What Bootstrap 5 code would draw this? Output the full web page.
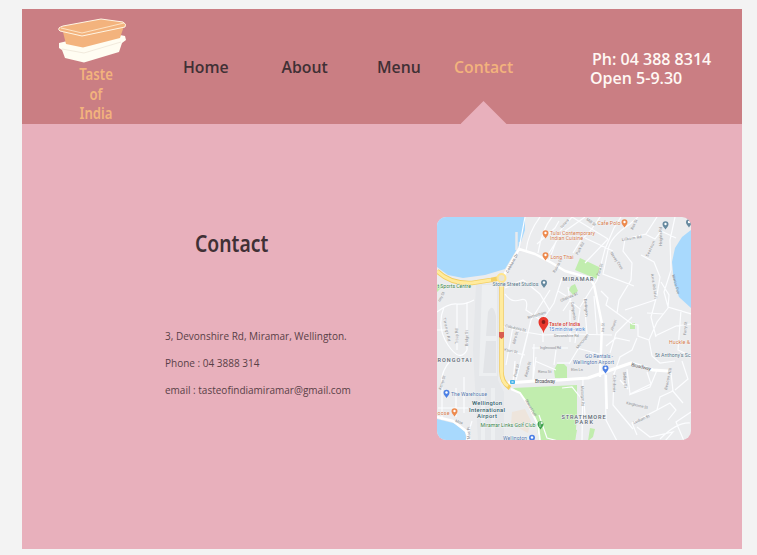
<!DOCTYPE html>
<html lang="en">
<head>
<meta charset="utf-8">
<meta name="viewport" content="width=device-width, initial-scale=1">
<title>Taste of India - Contact</title>
<link rel="stylesheet" href="https://cdn.jsdelivr.net/npm/bootstrap@5.3.0/dist/css/bootstrap.min.css">
<style>
body{background:#f3f3f3;font-family:"Open Sans",sans-serif;color:#403035;overflow:hidden}
.page-frame{width:720px;height:540px;margin:9px 0 0 22px;background:#e8b0bc}
.site-head{height:115px;background:#ca7e83}
.brand-box{width:148px;padding-top:9px;color:#f3b37d}
.brand-art{width:70px;height:46px;margin-left:35px}
.brand-name{font:600 15.5px/19.5px "Noto Sans","Open Sans",sans-serif;transform:scaleX(.85);margin-top:1px}
.site-nav{width:350px;margin-left:13px;font-size:15.8px;font-weight:600;line-height:22px;padding-top:47px}
.site-nav a{color:#403035;white-space:nowrap;padding:0}
.site-nav a.active{color:#f3b37d}
.nav-slot-a{width:98.5px}.nav-slot-b{width:95.5px}.nav-slot-c{width:77px}
.pointer{width:46px;height:23px;bottom:-46px;left:6.5px;background:#e8b0bc;clip-path:polygon(50% 0,100% 100%,0 100%)}
.hours{margin-left:57px;padding-top:41px;color:#fff8f4;font-size:16px;font-weight:600;line-height:19.2px;white-space:nowrap}
.hours-phone{margin-left:2px}
.details{width:415px;padding:105px 0 0 143px}
.details h1{font:600 23px/28px "Noto Sans","Open Sans",sans-serif;margin:0 0 0 29.5px;transform:scaleX(.84);transform-origin:left;color:#403035}
.lines{margin-top:66px;font-size:10px;line-height:27px;color:#593f47;white-space:nowrap}
.map-box{width:254px;height:223px;margin-top:93px;border-radius:9px}
</style>
<script src="https://cdn.jsdelivr.net/npm/bootstrap@5.3.0/dist/js/bootstrap.bundle.min.js"></script>
</head>
<body>
<div class="page-frame">
<header class="site-head d-flex">
  <div class="brand-box text-center">
    <svg class="brand-art d-block" viewBox="57 18 70 46">
      <path d="M59 43 59 48 62 50 65 58 84 62.5 119 52 122 43 126 40 125 36 105 32Z" fill="#fffdf2"/>
      <path d="M62 49 84 53 121 42" fill="none" stroke="#e7ddcf" stroke-width=".6"/>
      <path d="M63 32 66 44 83 47.500 120 38 124 26Z" fill="#f3b37d"/>
      <path d="M59 28 Q60 27 63 26 L101 19 123 22 Q127 24 125 27 L82 36 60 31 Q58 30 59 28Z" fill="#f3b37d" stroke="#fff5e4" stroke-width="1"/>
      <path d="M61 28 82 33 124 23" fill="none" stroke="#fff0d8" stroke-width=".8"/>
    </svg>
    <div class="brand-name">Taste<br>of<br>India</div>
  </div>
  <nav class="site-nav nav flex-nowrap align-items-start">
    <div class="nav-slot-a"><a class="nav-link" href="#">Home</a></div>
    <div class="nav-slot-b"><a class="nav-link" href="#">About</a></div>
    <div class="nav-slot-c"><a class="nav-link" href="#">Menu</a></div>
    <div class="position-relative"><a class="nav-link active" href="#">Contact</a><span class="pointer position-absolute"></span></div>
  </nav>
  <div class="hours"><div class="hours-phone">Ph: 04 388 8314</div><div>Open 5-9.30</div></div>
</header>
<main class="d-flex align-items-start">
  <section class="details">
    <h1>Contact</h1>
    <div class="lines"><div>3, Devonshire Rd, Miramar, Wellington.</div><div>Phone : 04 3888 314</div><div>email : tasteofindiamiramar@gmail.com</div></div>
  </section>
  <div class="map-box overflow-hidden">
  <svg class="d-block w-100 h-100" viewBox="437 217 254 223" font-family="Roboto, sans-serif">
    <rect x="437" y="217" width="254" height="224" fill="#ebecee"/>
    <!-- airport apron -->
    <path d="M476 284H499L498 380 504 392V441H478L473 350Z" fill="#e5e7ea"/>
    <path d="M482 285H497V376H479Z" fill="#edeff1"/>
    <path d="M488 312Q493 302 496 316V336H486ZM486 341H496V373H483Z" fill="#e2e4e7"/>
    <path d="M483 388V440M493 388V440" stroke="#edeff1" stroke-width="4" fill="none"/>
    <!-- water -->
    <g fill="#a8d9fd">
      <path d="M437 217H525V230L521 242 517 249 505 269 485 275 463 278 448 275 437 267Z"/>
      <path d="M691 230 682 237 675 248 672 262 674 283 679 297 691 308Z"/>
      <path d="M437 419 457 424 465 432 467 441H437Z"/>
    </g>
    <path d="M516.500 232V250M520 242V253" stroke="#e9eaed" stroke-width="2.500"/>
    <!-- parks -->
    <g fill="#c1edae">
      <path d="M513 388 577 385V416L575 441H539L536 420 527 401Z"/>
      <path d="M557 364H564L567 367V378H555L554 370Z"/>
      <path d="M570 428 577 430 575 441H568ZM590 428 595 429 593 437 588 441Z"/>
      <path d="M580 258 601 268 597 279 575 270Z"/>
      <path d="M571 286 575 284 578 291 573 295 569 290ZM630 323H635V329H630ZM437 284 443 286 437 292Z"/>
    </g>
    <path d="M512 412 525 409 531 421 528 433 511 424Z" fill="#eee5dc"/>
    <!-- minor streets -->
    <g fill="none" stroke="#fcfdff" stroke-width="1.200">
      <path d="M525 217 519 249M540 217Q528 233 526 251M552 217Q542 229 538 253M559 221 555 228 537 244M572 217 560 231 549 260M572 217 608 239M585 217 561 234 549 253"/>
      <path d="M437 312Q449 303 457 304T474 300M444 307Q436 327 448 345T467 350M457 304V350M467 302V350M437 330H446M451 360Q439 373 442 389V420M456 388V417M464 377V413M438 408H468M466 441 472 421"/>
      <path d="M505 294Q511 303 520 300T526 310L542 321M505 288 523 280 540 294 550 311M550 290 531 320 522 358M562 278 554 303 542 321M558 291 571 299 563 311M568 287 570 301 580 309 575 343M501 326 525 332 543 335 572 334 612 335M513 326 506 365M528 332 516 380M543 321V342M503 350 525 355M534 344 533 379M532 348H568M570 310V342M584 298 587 334M594 296 597 334M583 341 569 364M515 361 513 382M536 357 533 380M556 350 554 365M535 361 556 370"/>
      <path d="M600 217Q591 232 581 240L573 253M608 239 585 263M585 238 613 251M621 217 614 228 605 249 597 280 580 307M638 217 630 224Q610 237 608 250L603 274 634 286M657 217 646 234 625 239 623 251 632 263 631 280 619 300 617 313 632 324 638 325V336L649 340 657 322 668 308 669 295 661 282M645 234 655 239 661 231 676 238M675 217 670 240 671 270 664 292 668 307 691 314M641 255 654 262 660 277 657 295 651 317 656 337M655 300 625 310M647 313 664 314M632 317 616 333 610 353M617 313 606 305 608 298 601 291M637 338 632 350 620 357 614 374M649 340 652 356 660 363 675 361M655 336 676 326 691 324M681 310 678 350 691 356M606 346 616 338 630 341"/>
      <path d="M583 377 582 441M605 374 606 420 617 441M614 373 613 405 623 417 633 429M627 369 630 394 651 384 647 372M657 370 650 387 629 395M671 373 673 391 660 397 657 410 632 423 637 435M672 390 683 403M682 361 688 379 675 390M637 427 650 437 673 432 665 441M657 410 670 403 676 410 668 420M660 439Q677 422 690 423M684 441 676 422 691 412M539 415 547 438 558 441M562 388 572 387 584 402 585 415M557 363H570M620 380 628 389M590 353 603 361M577 348 606 356"/>
    </g>
    <!-- main streets -->
    <g fill="none" stroke="#fff" stroke-linejoin="round">
      <path d="M504 275 519 249 535 254 552 263 565 271 590 278 594 285 602 324 600 377" stroke-width="2.500"/>
      <path d="M508 383 535 381 560 380 588 378 605 372 631 363 653 370 668 371" stroke-width="3.200"/>
      <path d="M511 389 520 393 529 406 538 425 540 441M606 375 607 409" stroke-width="2"/>
      <path d="M437 417 453 421 466 431 470 441" stroke-width="2.500"/>
    </g>
    <g fill="none" stroke="#f3cf62"><path d="M437 271Q450 284 472 283L491 280 501 278M501.500 282V370Q501 382 510 388" stroke-width="4.600"/><path d="M437 271Q450 284 472 283L491 280M501.500 282V370Q501 382 508 386" stroke="#ffeb9e" stroke-width="3"/><circle cx="501.500" cy="278" r="4" fill="#e9e5d6" stroke="#ffe58d" stroke-width="2"/></g>
    <path d="M499 332H504V337L501.500 339 499 337Z" fill="#d85c4f"/><rect x="510" y="380" width="5" height="4" rx="1" fill="#49b3e8"/><path d="M511.500 382H513.500" stroke="#fff"/>
    <!-- street names -->
    <g font-size="3.900" fill="#8b8e92">
      <text transform="translate(508 273) rotate(-61)" textLength="21" fill="#686b70">Cobham Dr</text>
      <text transform="translate(440 302) rotate(-63)">ney St</text><text transform="translate(443 318) rotate(78)" textLength="24">Tirangi Rd</text>
      <text transform="translate(458 344) rotate(-90)">Troup Rd</text><text transform="translate(468 346) rotate(-90)">Bridge St</text>
      <text x="505" y="327" transform="rotate(13 505 327)" textLength="21">Caledonia St</text><text transform="translate(528 319) rotate(-17)">Rotherham</text>
      <text x="540" y="349" textLength="21">Inglewood Rd</text><text x="554" y="336.500">Devonshire Rd</text><text x="504" y="351" transform="rotate(10 504 351)">Kauri St</text><text transform="translate(515 344) rotate(-75)">Miro St</text><text transform="translate(516 377) rotate(-75)">Hunt St</text><text transform="translate(527 377) rotate(-75)">Kedah St</text><text x="538" y="373">Rimu St</text>
      <text transform="translate(561 302) rotate(-24)">Chelsea St</text><text transform="translate(555 273) rotate(-62)">Rauna St</text><text transform="translate(571 302) rotate(82)">Camperdn</text><text transform="translate(584 299) rotate(85)">Darlington</text><text transform="translate(604 332) rotate(-88)">Ira St</text><text transform="translate(613 331) rotate(-70)">Ahuriri</text>
      <text transform="translate(578 255) rotate(-62)">Park Rd</text><text transform="translate(599 276) rotate(-72)">Para St</text><text transform="translate(610 253) rotate(56)" textLength="20">Nevay Cres</text><text x="622" y="241" transform="rotate(-9 622 241)" textLength="20">Lilburn Rd</text><text transform="translate(648 257) rotate(-65)" textLength="17">Seatoun</text><text transform="translate(662 246) rotate(-90)">Heights Rd</text><text transform="translate(651 274) rotate(82)" textLength="25">Awa Rd Hill</text><text transform="translate(672 275) rotate(75)" textLength="20">Marine Pde</text><text transform="translate(686 335) rotate(-85)">Ferry St</text>
      <text transform="translate(578 349) rotate(-52)">Monorgan</text><text x="571" y="371">Elm Ln</text><text transform="translate(581 386) rotate(88)" textLength="20">Monorgan Rd</text><text transform="translate(613 375) rotate(90)">Caledonia</text><text transform="translate(623 372) rotate(85)">Sidlaw St</text><text transform="translate(667 390) rotate(-78)" textLength="22">Beacon Hill</text><text x="626" y="404" transform="rotate(13 626 404)">Kinghorne St</text><text x="634" y="424" transform="rotate(-24 634 424)">Ludlam St</text><text transform="translate(525 400) rotate(61)" textLength="19">Stewart Duff</text><text x="455" y="422" transform="rotate(18 455 422)">Moa</text><text transform="translate(470 439) rotate(-90)">Moa Pt</text><text transform="translate(441 390) rotate(-72)">Kemp St</text><text transform="translate(586 220) rotate(35)">Mill St</text><text transform="translate(633 230) rotate(-66)">Rex St</text><text transform="translate(562 229) rotate(-50)">Totara</text>
      <g fill="#505357" font-size="5"><text x="535" y="383" textLength="20">Broadway</text><text x="631" y="366" transform="rotate(13 631 366)" textLength="20">Broadway</text></g>
    </g>
    <!-- map pins -->
    <defs><path id="pin" d="M0 4.500C-1 2.500-3 1.500-3-.8A3 3 0 0 1 3-.8C3 1.500 1 2.500 0 4.500Z"/></defs>
    <g fill="#ed8a4e"><use href="#pin" x="545.500" y="234"/><use href="#pin" x="545.500" y="256"/><use href="#pin" x="624.500" y="223"/><use href="#pin" x="454.500" y="412"/></g>
    <g fill="#66899f"><use href="#pin" x="544" y="283.500"/><use href="#pin" x="665.500" y="225"/><use href="#pin" x="689" y="223"/></g>
    <g fill="#4d80e5"><use href="#pin" x="446.500" y="393.500"/><use href="#pin" x="605.500" y="369"/><use href="#pin" x="532" y="438.500"/></g><use href="#pin" x="540.500" y="425" fill="#3da04c"/>
    <g fill="#fff"><circle cx="545.500" cy="233" r="1.200"/><circle cx="545.500" cy="255" r="1.200"/><circle cx="624.500" cy="222" r="1.200"/><circle cx="454.500" cy="411" r="1.200"/><circle cx="544" cy="282.500" r="1.200"/><circle cx="665.500" cy="224" r="1.200"/><circle cx="689" cy="222" r="1.200"/><circle cx="446.500" cy="392.500" r="1.200"/><circle cx="605.500" cy="368" r="1.200"/><circle cx="532" cy="437.500" r="1.200"/><path d="M540 422V427M541 422L543 423 541 424" stroke="#fff" stroke-width=".6"/></g>
    <path d="M543.500 333.500C542.500 328 538.500 326.500 538.500 322A5 5 0 0 1 548.500 322C548.500 326.500 544.500 328 543.500 333.500Z" fill="#e8372c"/><circle cx="543.500" cy="322" r="1.900" fill="#891e19"/>
    <!-- places -->
    <g stroke="#f4f5f6" stroke-width=".8" paint-order="stroke" font-size="5.300">
      <g fill="#d77a4b"><text x="550" y="235" textLength="45">Tulsi Contemporary</text><text x="550" y="240" textLength="33">Indian Cuisine</text><text x="550.500" y="259" textLength="23">Long Thai</text><text x="597.500" y="225" textLength="23">Cafe Polo</text><text x="669" y="344" textLength="21">Huckle &amp;</text><text x="437.500" y="414.500" textLength="12">oose</text></g>
      <g fill="#557487"><text x="492.500" y="286" textLength="46">Stone Street Studios</text><text x="655" y="356.500" textLength="35.500">St Anthony's Sc</text></g>
      <g fill="#5477ad"><text x="451" y="396" textLength="36">The Warehouse</text><text x="585" y="358" textLength="28">GO Rentals -</text><text x="573" y="363.500" textLength="41">Wellington Airport</text><text x="503" y="439.500" textLength="24">Wellington</text></g>
      <g fill="#398447"><text x="480.500" y="427" textLength="55">Miramar Links Golf Club</text><text x="437.500" y="287.500" textLength="33.500">t Sports Centre</text></g>
      <text x="549" y="325.500" fill="#d53e32" font-weight="500" textLength="31">Taste of India</text><text x="549" y="330.500" fill="#4b83d5" font-size="4.800" textLength="36">15 min drive - work</text>
      <g fill="#33606c" font-size="5.900" font-weight="500" text-anchor="middle"><text x="487" y="405" textLength="30">Wellington</text><text x="487" y="411.500" textLength="36">International</text><text x="487" y="418" textLength="20">Airport</text></g>
      <g fill="#5b6672" font-size="5.500" font-weight="500"><text x="562.500" y="281" textLength="31">MIRAMAR</text><text x="437.500" y="362" textLength="34">RONGOTAI</text><text x="561.500" y="418.500" textLength="44">STRATHMORE</text><text x="575" y="424" textLength="18">PARK</text></g>
    </g>
  </svg>
  </div>
</main>
</div>
</body>
</html>
